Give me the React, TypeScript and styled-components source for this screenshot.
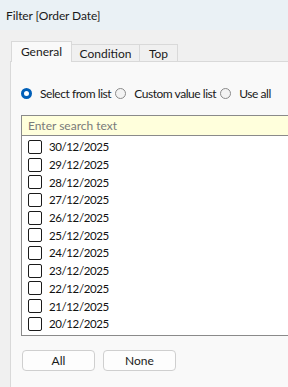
import React from 'react';
import styled, { createGlobalStyle } from 'styled-components';

const GlobalStyle = createGlobalStyle`
  html, body {
    margin: 0;
    padding: 0;
    background: #f0f0f0;
    overflow: hidden;
  }
  body {
    font-family: Lato, 'Liberation Sans', sans-serif;
    font-size: 12px;
    color: #1b1b1b;
  }
`;

const Window = styled.div`
  width: 288px;
  height: 387px;
  display: flex;
  flex-direction: column;
  background: #f0f0f0;
`;

const TitleBar = styled.div`
  height: 30px;
  flex-shrink: 0;
  display: flex;
  align-items: center;
  padding-left: 6px;
  background: #eaf1f5;
  font-size: 12px;
  letter-spacing: -0.1px;
  color: #1a1a1a;
`;

const Body = styled.div`
  flex: 1;
  padding: 11px 0 0 10px;
  display: flex;
  flex-direction: column;
`;

const TabStrip = styled.div`
  display: flex;
  align-items: flex-end;
  height: 21px;
  padding-left: 1px;
  position: relative;
  z-index: 1;
`;

const Tab = styled.div<{ $active?: boolean; $width: number }>`
  width: ${(p) => p.$width}px;
  height: ${(p) => (p.$active ? 21 : 18)}px;
  box-sizing: border-box;
  display: flex;
  align-items: center;
  justify-content: center;
  border: 1px solid #d9d9d9;
  border-bottom: ${(p) => (p.$active ? 'none' : '1px solid #d9d9d9')};
  border-left: ${(p) => (p.$active ? '1px solid #d9d9d9' : 'none')};
  background: ${(p) => (p.$active ? '#f9f9f9' : '#f0f0f0')};
  padding-bottom: ${(p) => (p.$active ? 2 : 0)}px;
  font-size: 12px;
  color: #1a1a1a;
`;

const Panel = styled.div`
  flex: 1;
  margin-top: -1px;
  width: 300px;
  border-top: 1px solid #d9d9d9;
  border-left: 1px solid #d9d9d9;
  background: #f9f9f9;
  padding: 21px 0 0 10px;
  display: flex;
  flex-direction: column;
`;

const RadioRow = styled.div`
  display: flex;
  align-items: center;
  height: 20px;
`;

const RadioOption = styled.label`
  display: flex;
  align-items: center;
  gap: 8px;
  margin-right: 4px;
  font-size: 12px;
  letter-spacing: -0.45px;
  color: #1a1a1a;
  white-space: nowrap;
`;

const RadioDot = styled.span<{ $checked?: boolean }>`
  width: 11px;
  height: 11px;
  box-sizing: border-box;
  border-radius: 50%;
  flex-shrink: 0;
  border: ${(p) => (p.$checked ? '3px solid #005fb8' : '1px solid #8a8a8a')};
  background: ${(p) => (p.$checked ? '#ffffff' : '#f3f3f3')};
`;

const SearchBox = styled.div`
  margin-top: 12px;
  height: 21px;
  box-sizing: border-box;
  border: 1px solid #8a8a8a;
  border-right: none;
  background: #ffffdc;
  display: flex;
  align-items: center;
  padding-left: 6px;
  color: #7a7a7a;
  font-size: 12px;
`;

const List = styled.div`
  height: 200px;
  box-sizing: border-box;
  border-left: 1px solid #8a8a8a;
  border-bottom: 1px solid #8a8a8a;
  background: #ffffff;
  padding-top: 2px;
  overflow: hidden;
`;

const Item = styled.div`
  height: 17.7px;
  display: flex;
  align-items: center;
  padding-left: 6px;
  gap: 7px;
  font-size: 11.5px;
  letter-spacing: -0.4px;
  color: #111111;
`;

const Check = styled.span`
  width: 14px;
  height: 14px;
  box-sizing: border-box;
  border: 1px solid #1a1a1a;
  border-radius: 2px;
  background: #ffffff;
  flex-shrink: 0;
`;

const ButtonRow = styled.div`
  display: flex;
  gap: 8px;
  margin-top: 14px;
  padding-left: 1px;
`;

const Button = styled.button`
  width: 73px;
  height: 21px;
  box-sizing: border-box;
  border: 1px solid #cfcfcf;
  border-radius: 4px;
  background: #fdfdfd;
  font-family: inherit;
  font-size: 12px;
  color: #1a1a1a;
  padding: 0;
`;

const dates = [
  '30/12/2025',
  '29/12/2025',
  '28/12/2025',
  '27/12/2025',
  '26/12/2025',
  '25/12/2025',
  '24/12/2025',
  '23/12/2025',
  '22/12/2025',
  '21/12/2025',
  '20/12/2025',
];

const App: React.FC = () => {
  return (
    <Window>
      <GlobalStyle />
      <TitleBar>Filter [Order Date]</TitleBar>
      <Body>
        <TabStrip>
          <Tab $active $width={61}>General</Tab>
          <Tab $width={68}>Condition</Tab>
          <Tab $width={38}>Top</Tab>
        </TabStrip>
        <Panel>
          <RadioRow>
            <RadioOption>
              <RadioDot $checked />
              Select from list
            </RadioOption>
            <RadioOption>
              <RadioDot />
              Custom value list
            </RadioOption>
            <RadioOption>
              <RadioDot />
              Use all
            </RadioOption>
          </RadioRow>
          <SearchBox>Enter search text</SearchBox>
          <List>
            {dates.map((d) => (
              <Item key={d}>
                <Check />
                {d}
              </Item>
            ))}
          </List>
          <ButtonRow>
            <Button>All</Button>
            <Button>None</Button>
          </ButtonRow>
        </Panel>
      </Body>
    </Window>
  );
};

export default App;
